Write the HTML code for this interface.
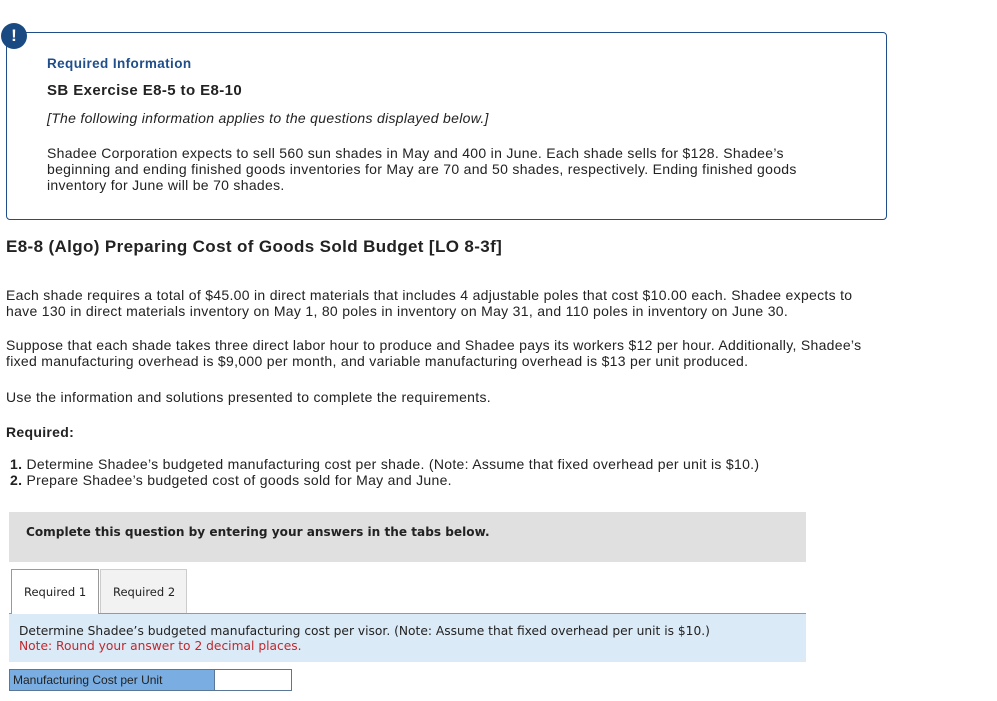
<!DOCTYPE html>
<html><head><meta charset="utf-8"><style>
body{margin:0;width:997px;height:701px;background:#fff;position:relative;font-family:"Liberation Sans",Arial,sans-serif;color:#222;overflow:hidden}
.a{position:absolute;white-space:nowrap;line-height:16px}
.p{font-size:14px;letter-spacing:0.3px}
.v{font-family:"DejaVu Sans",Verdana,sans-serif}
</style></head><body>
<div style="position:absolute;left:6px;top:32px;width:879px;height:186px;border:1px solid #1f4e8a;border-radius:4px"></div>
<div style="position:absolute;left:1px;top:23px;width:26px;height:26px;border-radius:50%;background:#1a4a82;color:#fff;font-weight:bold;font-size:17px;text-align:center;line-height:26px">!</div>
<div class="a" style="left:47px;top:56px;font-size:13.5px;letter-spacing:0.4px;font-weight:bold;color:#1f4e8a">Required Information</div>
<div class="a" style="left:47px;top:83px;font-size:15px;letter-spacing:0.4px;font-weight:bold">SB Exercise E8-5 to E8-10</div>
<div class="a p" style="left:47px;top:110px;font-style:italic">[The following information applies to the questions displayed below.]</div>
<div class="a p" style="left:47px;top:145px">Shadee Corporation expects to sell 560 sun shades in May and 400 in June. Each shade sells for $128. Shadee’s<br>beginning and ending finished goods inventories for May are 70 and 50 shades, respectively. Ending finished goods<br>inventory for June will be 70 shades.</div>
<div class="a" style="left:6px;top:237px;font-size:17px;letter-spacing:0.37px;font-weight:bold;line-height:20px">E8-8 (Algo) Preparing Cost of Goods Sold Budget [LO 8-3f]</div>
<div class="a p" style="left:6px;top:287px">Each shade requires a total of $45.00 in direct materials that includes 4 adjustable poles that cost $10.00 each. Shadee expects to<br>have 130 in direct materials inventory on May 1, 80 poles in inventory on May 31, and 110 poles in inventory on June 30.</div>
<div class="a p" style="left:6px;top:337px">Suppose that each shade takes three direct labor hour to produce and Shadee pays its workers $12 per hour. Additionally, Shadee’s<br>fixed manufacturing overhead is $9,000 per month, and variable manufacturing overhead is $13 per unit produced.</div>
<div class="a p" style="left:6px;top:389px">Use the information and solutions presented to complete the requirements.</div>
<div class="a p" style="left:6px;top:424px;font-weight:bold">Required:</div>
<div class="a p" style="left:10px;top:456px"><b>1.</b> Determine Shadee’s budgeted manufacturing cost per shade. (Note: Assume that fixed overhead per unit is $10.)<br><b>2.</b> Prepare Shadee’s budgeted cost of goods sold for May and June.</div>
<div style="position:absolute;left:9px;top:512px;width:797px;height:50px;background:#e0e0e0"></div>
<div class="a v" style="left:26px;top:524px;font-size:12.1px;font-weight:bold">Complete this question by entering your answers in the tabs below.</div>
<div style="position:absolute;left:9px;top:613px;width:797px;height:1px;background:#999"></div>
<div style="position:absolute;left:11px;top:569px;width:86px;height:45px;border:1px solid #999;border-bottom:none;background:#fff"></div>
<div style="position:absolute;left:100px;top:569px;width:85px;height:43px;border:1px solid #ccc;border-bottom:none;background:#f2f2f2"></div>
<div class="a v" style="left:24px;top:584px;font-size:11.5px">Required 1</div>
<div class="a v" style="left:113px;top:584px;font-size:11.5px">Required 2</div>
<div style="position:absolute;left:9px;top:614px;width:797px;height:48px;background:#dbeaf7"></div>
<div class="a v" style="left:19px;top:624px;font-size:12.25px;line-height:15px">Determine Shadee’s budgeted manufacturing cost per visor. (Note: Assume that fixed overhead per unit is $10.)<br><span style="color:#c0282d">Note: Round your answer to 2 decimal places.</span></div>
<div style="position:absolute;left:9px;top:669px;width:204px;height:20px;background:#7aaee3;border:1px solid #5a7896"></div>
<div class="a" style="left:13px;top:672px;font-size:12px">Manufacturing Cost per Unit</div>
<div style="position:absolute;left:214px;top:669px;width:76px;height:20px;background:#fff;border:1px solid #5a7896"></div>
</body></html>
